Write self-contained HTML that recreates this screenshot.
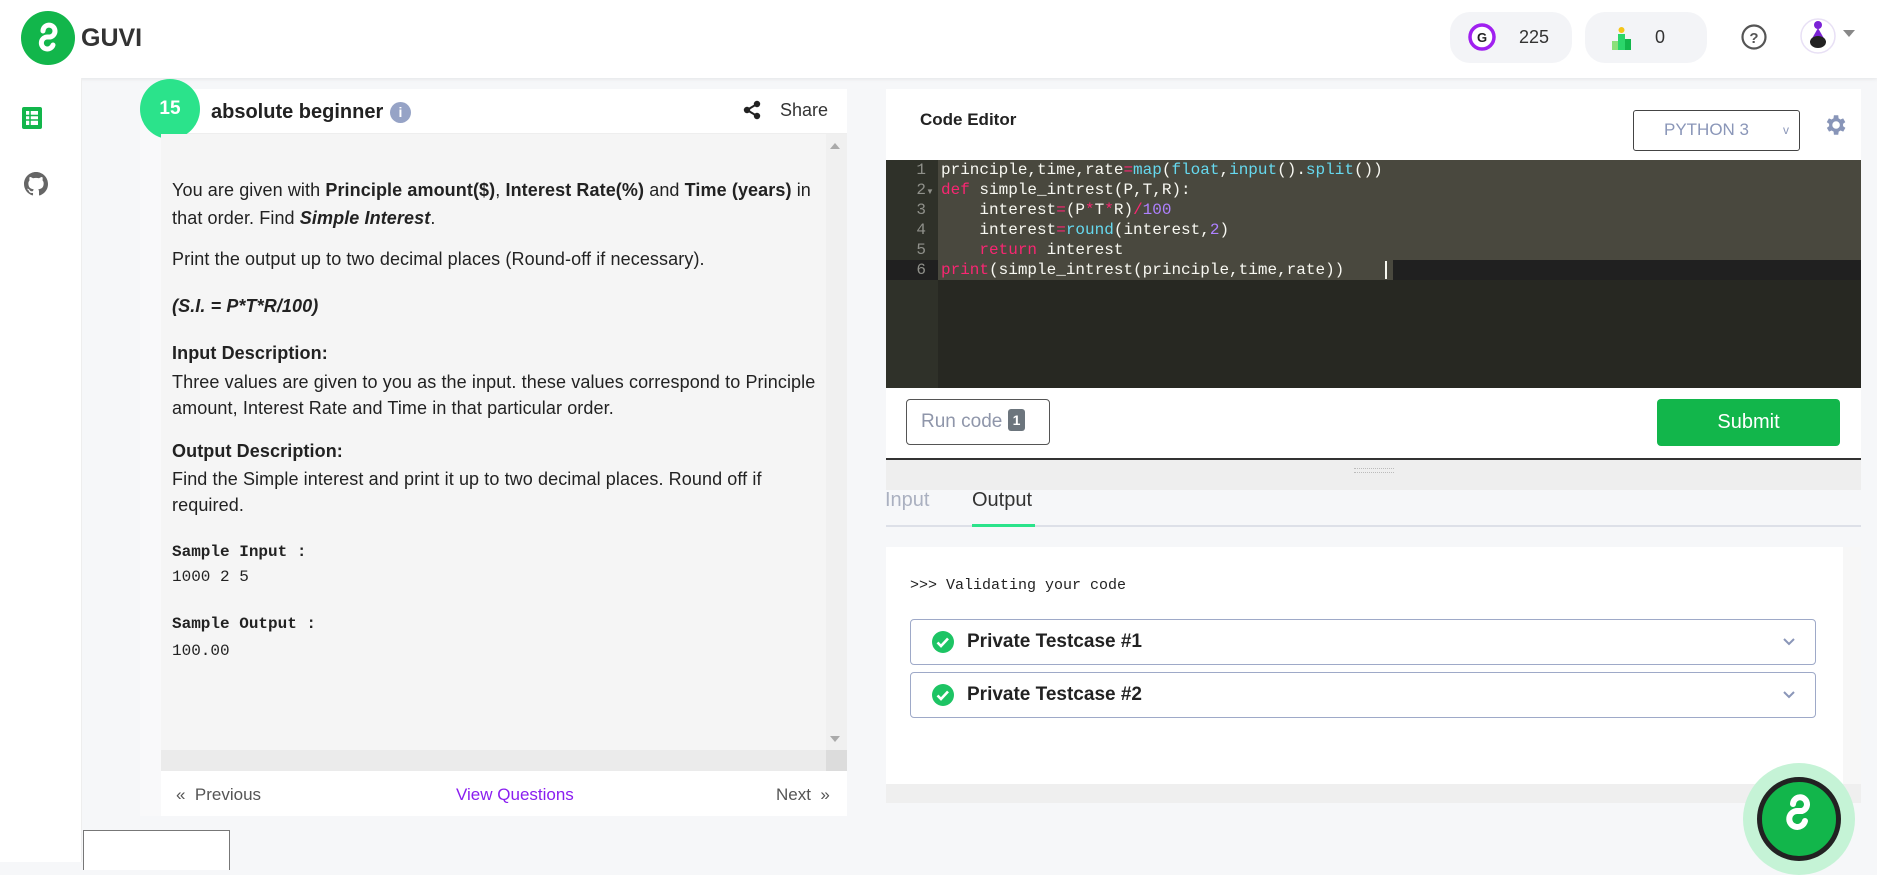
<!DOCTYPE html>
<html><head><meta charset="utf-8"><style>
*{box-sizing:border-box;margin:0;padding:0}
body{width:1877px;height:862px;overflow:hidden;background:#f6f7f9;font-family:"Liberation Sans",sans-serif;color:#222;position:relative}
.abs{position:absolute}
.hdr{left:0;top:0;width:1877px;height:78px;background:#fff;box-shadow:0 1px 4px rgba(0,0,0,.08)}
.side{left:0;top:78px;width:82px;height:784px;background:#fff;border-right:1px solid #eee}
.pill{top:12px;height:51px;background:#f3f4f7;border-radius:20px}
.code{font-family:"Liberation Mono",monospace;font-size:16px;line-height:20px;color:#f8f8f2;white-space:pre}
.k{color:#f92672}.b{color:#66d9ef}.n{color:#ae81ff}
.txt{font-size:18px;color:#222;letter-spacing:0.1px}
.tc{left:910px;width:906px;height:46px;border:1.5px solid #9ea9c8;border-radius:4px;background:#fff}
.tc span{position:absolute;left:56px;top:11px;font-weight:bold;font-size:19px}
</style></head><body>
<div class="abs hdr"></div>
<svg class="abs" style="left:21px;top:11px" width="54" height="54" viewBox="0 0 54 54"><circle cx="27" cy="27" r="27" fill="#12b64b"/><path d="M22 20a6 6 0 1 1 7 6h-2a6 6 0 1 0 5 8" stroke="#fff" stroke-width="5" fill="none" stroke-linecap="round"/></svg>
<div class="abs" style="left:81px;top:24px;font-size:25px;font-weight:bold;color:#333">GUVI</div>
<div class="abs pill" style="left:1450px;width:122px"></div>
<svg class="abs" style="left:1468px;top:23px" width="28" height="28"><circle cx="14" cy="14" r="12" fill="#fff" stroke="#a020f0" stroke-width="3.5"/><text x="14" y="19" font-size="13" font-weight="bold" text-anchor="middle" font-family="Liberation Sans" fill="#222">G</text></svg>
<div class="abs" style="left:1519px;top:27px;font-size:18px;color:#333">225</div>
<div class="abs pill" style="left:1585px;width:122px"></div>
<svg class="abs" style="left:1609px;top:25px" width="26" height="26"><rect x="9" y="9" width="7" height="16" fill="#2bd66a"/><rect x="3" y="16" width="6" height="9" fill="#8be07a"/><rect x="16" y="14" width="6" height="11" fill="#12b64b"/><circle cx="12.5" cy="5" r="3" fill="#f5c518"/></svg>
<div class="abs" style="left:1655px;top:27px;font-size:18px;color:#333">0</div>
<svg class="abs" style="left:1740px;top:23px" width="28" height="28"><circle cx="14" cy="14" r="11.5" fill="none" stroke="#555" stroke-width="2.2"/><text x="14" y="20" font-size="15" font-weight="bold" text-anchor="middle" font-family="Liberation Sans" fill="#555">?</text></svg>
<svg class="abs" style="left:1800px;top:16px" width="36" height="40"><circle cx="18" cy="20" r="17" fill="#fff" stroke="#e8e0f5" stroke-width="1.5"/><circle cx="18" cy="9" r="4" fill="#7b22d6"/><path d="M18 12l-8 14h16z" fill="#7b22d6"/><ellipse cx="18" cy="26" rx="8" ry="6" fill="#222"/></svg>
<div class="abs" style="left:1843px;top:30px;width:0;height:0;border:6px solid transparent;border-top:7px solid #888"></div>

<div class="abs side"></div>
<svg class="abs" style="left:21px;top:106px" width="22" height="24"><rect x="1" y="1" width="20" height="22" rx="2" fill="#12b64b"/><rect x="5" y="5" width="12" height="14" fill="#fff"/><path d="M5 9.5h12M5 14h12M9 5v14" stroke="#12b64b" stroke-width="1.5"/></svg>
<svg class="abs" style="left:24px;top:172px" width="24" height="24" viewBox="0 0 16 16"><path fill="#666" d="M8 0C3.580 0 0 3.58 0 8c0 3.54 2.29 6.53 5.47 7.59.4.07.55-.17.55-.38v-1.33c-2.23.48-2.7-1.070-2.7-1.070-.36-.92-.89-1.170-.89-1.170-.73-.5.06-.49.06-.49.8.06 1.23.83 1.23.83.71 1.23 1.87.87 2.33.66.07-.52.28-.87.5-1.07-1.78-.2-3.64-.89-3.64-3.95 0-.87.31-1.59.82-2.15-.08-.2-.36-1.02.08-2.12 0 0 .67-.21 2.2.82.64-.18 1.32-.27 2-.27.68 0 1.36.09 2 .27 1.53-1.04 2.2-.82 2.2-.82.44 1.1.16 1.92.08 2.12.51.56.82 1.27.82 2.15 0 3.07-1.87 3.75-3.65 3.95.29.25.54.73.54 1.48v2.2c0 .21.15.46.55.38A8.013 8.013 0 0016 8c0-4.42-3.58-8-8-8z"/></svg>

<div class="abs" style="left:140px;top:89px;width:707px;height:727px;background:#f9f9fa"></div>
<div class="abs" style="left:161px;top:89px;width:686px;height:45px;background:#fff;border-bottom:1px solid #eee"></div>
<div class="abs" style="left:140px;top:79px;width:60px;height:60px;border-radius:50%;background:#2be38b;color:#fff;font-weight:bold;font-size:19px;text-align:center;line-height:60px">15</div>
<div class="abs" style="left:211px;top:101px;font-size:20px;font-weight:bold;color:#222">absolute beginner</div>
<div class="abs" style="left:390px;top:102px;width:21px;height:21px;border-radius:50%;background:#96a3c6;color:#fff;font-size:14px;font-weight:bold;text-align:center;line-height:21px">i</div>
<svg class="abs" style="left:743px;top:100px" width="18" height="20"><circle cx="14" cy="4" r="3.2" fill="#222"/><circle cx="4" cy="10" r="3.2" fill="#222"/><circle cx="14" cy="16" r="3.2" fill="#222"/><path d="M14 4L4 10l10 6" stroke="#222" stroke-width="2" fill="none"/></svg>
<div class="abs" style="left:780px;top:100px;font-size:18px;color:#333">Share</div>
<div class="abs" style="left:161px;top:134px;width:665px;height:616px;background:#f5f5f5"></div>
<div class="abs" style="left:826px;top:134px;width:21px;height:616px;background:#f0f0f0"></div>
<div class="abs" style="left:830px;top:143px;border:5px solid transparent;border-bottom:6px solid #aaa;border-top:0"></div>
<div class="abs" style="left:830px;top:736px;border:5px solid transparent;border-top:6px solid #aaa;border-bottom:0"></div>
<div class="abs" style="left:161px;top:750px;width:686px;height:21px;background:#ebebeb"></div>
<div class="abs" style="left:826px;top:750px;width:21px;height:21px;background:#dcdcdc"></div>
<div class="abs txt" style="left:172px;top:176px;line-height:28px;width:642px">You are given with <b>Principle amount($)</b>, <b>Interest Rate(%)</b> and <b>Time (years)</b> in that order. Find <b><i>Simple Interest</i></b>.</div>
<div class="abs txt" style="left:172px;top:249px">Print the output up to two decimal places (Round-off if necessary).</div>
<div class="abs txt" style="left:172px;top:296px;font-weight:bold;font-style:italic">(S.I. = P*T*R/100)</div>
<div class="abs txt" style="left:172px;top:343px;font-weight:bold">Input Description:</div>
<div class="abs txt" style="left:172px;top:369px;line-height:26px;width:645px">Three values are given to you as the input. these values correspond to Principle amount, Interest Rate and Time in that particular order.</div>
<div class="abs txt" style="left:172px;top:441px;font-weight:bold">Output Description:</div>
<div class="abs txt" style="left:172px;top:466px;line-height:26px;width:620px">Find the Simple interest and print it up to two decimal places. Round off if required.</div>
<div class="abs" style="left:172px;top:543px;font-family:'Liberation Mono',monospace;font-size:16px;font-weight:bold">Sample Input :</div>
<div class="abs" style="left:172px;top:568px;font-family:'Liberation Mono',monospace;font-size:16px">1000 2 5</div>
<div class="abs" style="left:172px;top:615px;font-family:'Liberation Mono',monospace;font-size:16px;font-weight:bold">Sample Output :</div>
<div class="abs" style="left:172px;top:642px;font-family:'Liberation Mono',monospace;font-size:16px">100.00</div>
<div class="abs" style="left:161px;top:771px;width:686px;height:45px;background:#fff"></div>
<div class="abs" style="left:176px;top:785px;font-size:17px;color:#555">« &nbsp;Previous</div>
<div class="abs" style="left:456px;top:785px;font-size:17px;color:#8a1ef0">View Questions</div>
<div class="abs" style="left:776px;top:785px;font-size:17px;color:#555">Next &nbsp;»</div>
<div class="abs" style="left:83px;top:830px;width:147px;height:40px;background:#fff;border:1px solid #777;border-bottom:0"></div>

<div class="abs" style="left:886px;top:89px;width:975px;height:369px;background:#fff"></div>
<div class="abs" style="left:920px;top:110px;font-size:17px;font-weight:bold;color:#222">Code Editor</div>
<div class="abs" style="left:1633px;top:110px;width:167px;height:41px;border:1.5px solid #444;border-radius:3px;color:#8a96b8;font-size:17px;line-height:38px;padding-left:30px">PYTHON 3<span style="position:absolute;right:10px;font-size:12px">v</span></div>
<svg class="abs" style="left:1822px;top:112px" width="26" height="26" viewBox="0 0 24 24"><path fill="#8895b8" d="M19.4 13a7.5 7.5 0 000-2l2.1-1.6-2-3.5-2.5 1a7.6 7.6 0 00-1.7-1L15 3h-4l-.4 2.9a7.6 7.6 0 00-1.7 1l-2.5-1-2 3.5L6.6 11a7.5 7.5 0 000 2l-2.1 1.6 2 3.5 2.5-1a7.6 7.6 0 001.7 1L11 21h4l.4-2.9a7.6 7.6 0 001.7-1l2.5 1 2-3.5zM13 15.5a3.5 3.5 0 110-7 3.5 3.5 0 010 7z"/></svg>
<div class="abs" style="left:886px;top:160px;width:975px;height:228px;background:#272822"></div>
<div class="abs" style="left:886px;top:160px;width:52px;height:228px;background:#2f3129"></div>
<div class="abs" style="left:938px;top:160px;width:923px;height:100px;background:#49483e"></div>
<div class="abs" style="left:886px;top:260px;width:975px;height:20px;background:#202020"></div>
<div class="abs" style="left:938px;top:260px;width:455px;height:20px;background:#49483e"></div>
<div class="abs" style="left:1385px;top:261px;width:2px;height:18px;background:#f8f8f0"></div>
<div class="abs code" style="left:886px;top:160px;width:40px;text-align:right;color:#8f908a">1
2
3
4
5
6</div>
<div class="abs" style="left:926px;top:187px;font-size:8px;color:#8f908a">▼</div>
<div class="abs code" style="left:941px;top:160px">principle,time,rate<span class="k">=</span><span class="b">map</span>(<span class="b">float</span>,<span class="b">input</span>().<span class="b">split</span>())
<span class="k">def</span> simple_intrest(P,T,R):
    interest<span class="k">=</span>(P<span class="k">*</span>T<span class="k">*</span>R)<span class="k">/</span><span class="n">100</span>
    interest<span class="k">=</span><span class="b">round</span>(interest,<span class="n">2</span>)
    <span class="k">return</span> interest
<span class="k">print</span>(simple_intrest(principle,time,rate))</div>
<div class="abs" style="left:906px;top:399px;width:144px;height:46px;border:1.5px solid #555;border-radius:4px;color:#8f96aa;font-size:19px;line-height:43px;padding-left:14px">Run code <span style="display:inline-block;background:#6c757d;color:#fff;font-size:14px;font-weight:bold;border-radius:3px;padding:0 5px;line-height:22px;vertical-align:2px">1</span></div>
<div class="abs" style="left:1657px;top:399px;width:183px;height:47px;background:#12b64b;border-radius:4px;color:#fff;font-size:20px;text-align:center;line-height:47px">Submit</div>
<div class="abs" style="left:886px;top:458px;width:975px;height:2px;background:#333"></div>
<div class="abs" style="left:886px;top:460px;width:975px;height:30px;background:#eeeeee"></div>
<div class="abs" style="left:1354px;top:468px;width:40px;height:5px;border-top:1px dotted #bbb;border-bottom:1px dotted #bbb"></div>
<div class="abs" style="left:885px;top:489px;font-size:20px;color:#aab0c0">Input</div>
<div class="abs" style="left:972px;top:489px;font-size:20px;color:#333">Output</div>
<div class="abs" style="left:886px;top:525px;width:975px;height:1.5px;background:#dde0e8"></div>
<div class="abs" style="left:972px;top:524px;width:63px;height:3px;background:#2be38b"></div>
<div class="abs" style="left:886px;top:547px;width:975px;height:237px;background:#fff"></div>
<div class="abs" style="left:1843px;top:547px;width:18px;height:237px;background:#f7f7f7"></div>
<div class="abs" style="left:910px;top:577px;font-family:'Liberation Mono',monospace;font-size:15px;color:#222">&gt;&gt;&gt; Validating your code</div>
<div class="abs tc" style="top:619px"><span>Private Testcase #1</span></div>
<div class="abs tc" style="top:672px"><span>Private Testcase #2</span></div>
<svg class="abs" style="left:931px;top:630px" width="24" height="24"><circle cx="12" cy="12" r="11" fill="#1dc464"/><path d="M6.5 12.5l3.5 3.5 7-7.5" stroke="#fff" stroke-width="2.6" fill="none"/></svg>
<svg class="abs" style="left:931px;top:683px" width="24" height="24"><circle cx="12" cy="12" r="11" fill="#1dc464"/><path d="M6.5 12.5l3.5 3.5 7-7.5" stroke="#fff" stroke-width="2.6" fill="none"/></svg>
<svg class="abs" style="left:1782px;top:637px" width="14" height="10"><path d="M2 2l5 5 5-5" stroke="#8a96b8" stroke-width="2" fill="none"/></svg>
<svg class="abs" style="left:1782px;top:690px" width="14" height="10"><path d="M2 2l5 5 5-5" stroke="#8a96b8" stroke-width="2" fill="none"/></svg>
<div class="abs" style="left:886px;top:784px;width:975px;height:19px;background:#efefef"></div>
<div class="abs" style="left:1743px;top:763px;width:112px;height:112px;border-radius:50%;background:#c5f3d6"></div>
<div class="abs" style="left:1757px;top:777px;width:84px;height:84px;border-radius:50%;background:#12b64b;border:5px solid #222"></div>
<svg class="abs" style="left:1783px;top:790px" width="32" height="60"><path d="M10 14a7 7 0 1 1 9 7h-4a8 8 0 1 0 7 10" stroke="#fff" stroke-width="6" fill="none" stroke-linecap="round"/></svg>
</body></html>
